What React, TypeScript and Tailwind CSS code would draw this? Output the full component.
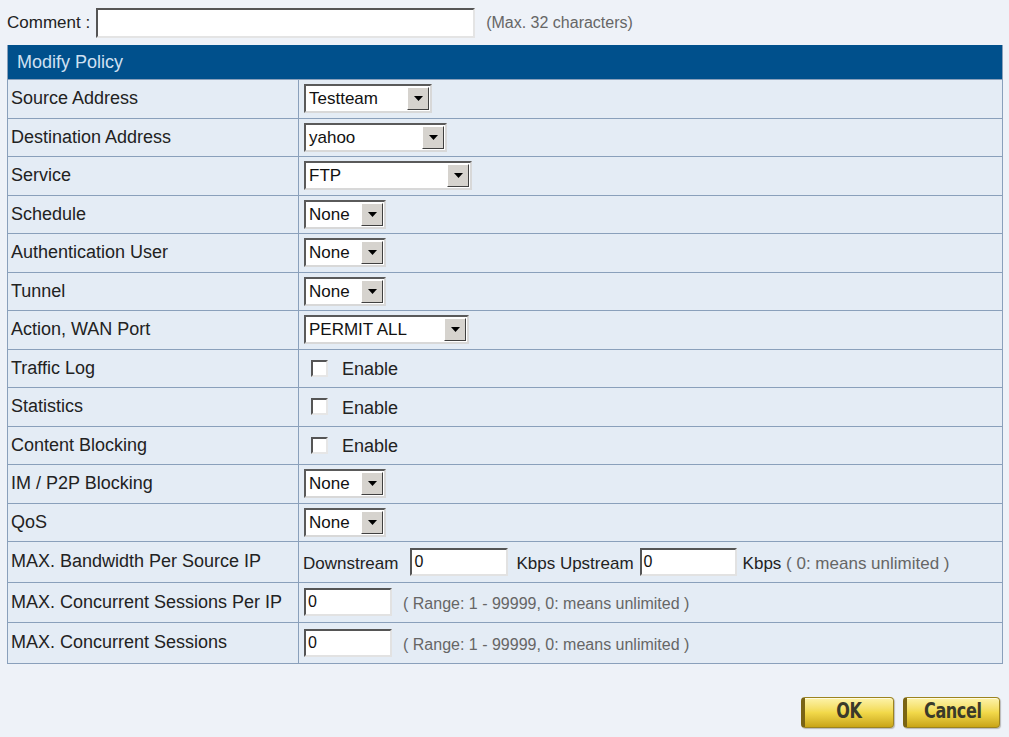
import React from "react";

const FONT = { fontFamily: '"Liberation Sans", Arial, sans-serif' };

function Select({ value, width }: { value: string; width: string }) {
  return (
    <div
      className={`${width} h-[29px] flex items-stretch bg-white border-2 border-t-[#5a5a5a] border-l-[#5a5a5a] border-b-[#d8d8d8] border-r-[#d8d8d8]`}
    >
      <div className="flex-1 flex items-center pl-[3px] text-[17px] text-[#111] leading-none">{value}</div>
      <div className="w-[22px] m-[1px] flex items-center justify-center bg-[#d6d3ce] border border-t-white border-l-white border-b-[#404040] border-r-[#404040]">
        <svg width="9" height="5" viewBox="0 0 9 5">
          <polygon points="0,0 9,0 4.5,5" fill="#000" />
        </svg>
      </div>
    </div>
  );
}

function TextBox({ value, width }: { value: string; width: string }) {
  return (
    <div
      className={`${width} h-[28px] flex items-center bg-white border-2 border-t-[#555] border-l-[#555] border-b-[#e2e2e2] border-r-[#e2e2e2] pl-[2px] text-[16px] text-[#111]`}
    >
      {value}
    </div>
  );
}

function Check() {
  return (
    <div className="flex items-center">
      <div className="ml-[12px] w-[17px] h-[17px] bg-white border-2 border-t-[#555] border-l-[#555] border-b-[#e6e6e6] border-r-[#e6e6e6]" />
      <span className="ml-[14px] mt-[3px] text-[18px] text-[#222]">Enable</span>
    </div>
  );
}

function Row({ label, tall, children }: { label: string; tall?: boolean; children: React.ReactNode }) {
  return (
    <div
      className={`grid grid-cols-[291px_1fr] border-t border-[#8aa0bb] bg-[#e4ecf5] ${tall ? "h-[40.5px]" : "h-[38.5px]"}`}
    >
      <div className="flex items-center pl-[3px] border-r border-[#8aa0bb] text-[18px] text-[#222] whitespace-nowrap">
        {label}
      </div>
      <div className="flex items-center">{children}</div>
    </div>
  );
}

export default function App() {
  return (
    <div className="min-h-screen w-[1009px] bg-[#eef2f8]" style={FONT}>
      {/* comment */}
      <div className="flex items-center pt-[8px] pl-[7px]">
        <span className="text-[17px] text-[#222]">Comment :</span>
        <div className="ml-[6px] w-[379px] h-[30px] bg-white border-2 border-t-[#555] border-l-[#555] border-b-[#e4e4e4] border-r-[#e4e4e4]" />
        <span className="ml-[11px] text-[16px] text-[#666]">(Max. 32 characters)</span>
      </div>

      {/* tabla */}
      <div className="ml-[7px] mt-[7px] w-[996px] border-x border-b border-[#8aa0bb]">
        <div className="h-[34px] flex items-center pl-[9px] bg-[#00508c] text-[18px] text-[#cfe0f2]">
          Modify Policy
        </div>
        <Row label="Source Address">
          <div className="ml-[5px]"><Select value="Testteam" width="w-[128px]" /></div>
        </Row>
        <Row label="Destination Address">
          <div className="ml-[5px]"><Select value="yahoo" width="w-[143px]" /></div>
        </Row>
        <Row label="Service">
          <div className="ml-[5px]"><Select value="FTP" width="w-[168px]" /></div>
        </Row>
        <Row label="Schedule">
          <div className="ml-[5px]"><Select value="None" width="w-[82px]" /></div>
        </Row>
        <Row label="Authentication User">
          <div className="ml-[5px]"><Select value="None" width="w-[82px]" /></div>
        </Row>
        <Row label="Tunnel">
          <div className="ml-[5px]"><Select value="None" width="w-[82px]" /></div>
        </Row>
        <Row label="Action, WAN Port">
          <div className="ml-[5px]"><Select value="PERMIT ALL" width="w-[165px]" /></div>
        </Row>
        <Row label="Traffic Log"><Check /></Row>
        <Row label="Statistics"><Check /></Row>
        <Row label="Content Blocking"><Check /></Row>
        <Row label="IM / P2P Blocking">
          <div className="ml-[5px]"><Select value="None" width="w-[82px]" /></div>
        </Row>
        <Row label="QoS">
          <div className="ml-[5px]"><Select value="None" width="w-[82px]" /></div>
        </Row>
        <Row label="MAX. Bandwidth Per Source IP" tall>
          <div className="flex items-center text-[17px] text-[#222]">
            <span className="ml-[4px] mt-[4px]">Downstream</span>
            <div className="ml-[12px]"><TextBox value="0" width="w-[98px]" /></div>
            <span className="ml-[8px] mt-[4px]">Kbps Upstream</span>
            <div className="ml-[6px]"><TextBox value="0" width="w-[97px]" /></div>
            <span className="ml-[6px] mt-[4px]">
              Kbps <span className="text-[#666]">( 0: means unlimited )</span>
            </span>
          </div>
        </Row>
        <Row label="MAX. Concurrent Sessions Per IP" tall>
          <div className="ml-[5px]"><TextBox value="0" width="w-[88px]" /></div>
          <span className="ml-[11px] mt-[4px] text-[16px] text-[#666]">( Range: 1 - 99999, 0: means unlimited )</span>
        </Row>
        <Row label="MAX. Concurrent Sessions" tall>
          <div className="ml-[5px]"><TextBox value="0" width="w-[88px]" /></div>
          <span className="ml-[11px] mt-[4px] text-[16px] text-[#666]">( Range: 1 - 99999, 0: means unlimited )</span>
        </Row>
      </div>

      {/* botones */}
      <div className="flex justify-end gap-[9px] pr-[9px] mt-[33px]">
        <GoldButton label="OK" width="w-[93px]" />
        <GoldButton label="Cancel" width="w-[97px]" />
      </div>
    </div>
  );
}

function GoldButton({ label, width }: { label: string; width: string }) {
  return (
    <button
      className={`${width} h-[31px] rounded-[4px] border border-[#9c8420] border-l-[4px] border-l-[#7a6414] bg-gradient-to-b from-[#fdf3a8] via-[#f2d94a] to-[#c9a514] shadow-[inset_0_1px_0_#fffbe0,1px_1px_1px_#b8b8b8] flex items-center justify-center`}
    >
      <span
        className="text-[21px] font-bold text-[#3a3a2a] tracking-[-0.5px] scale-x-[0.85]"
        style={{ fontFamily: '"DejaVu Sans Condensed", "DejaVu Sans", sans-serif' }}
      >
        {label}
      </span>
    </button>
  );
}
